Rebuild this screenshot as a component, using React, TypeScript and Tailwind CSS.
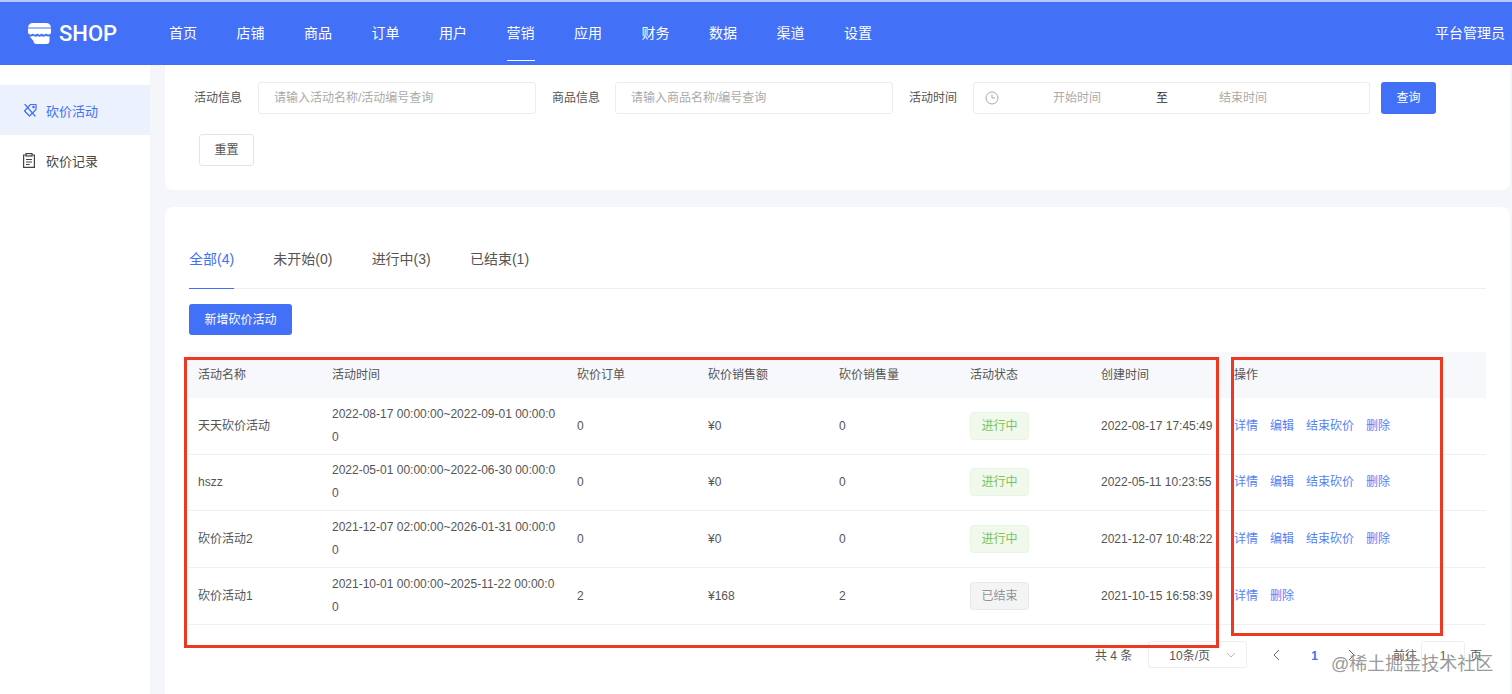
const navItems = ["首页", "店铺", "商品", "订单", "用户", "营销", "应用", "财务", "数据", "渠道", "设置"];

const tabs = ["全部(4)", "未开始(0)", "进行中(3)", "已结束(1)"];

const columns = ["活动名称", "活动时间", "砍价订单", "砍价销售额", "砍价销售量", "活动状态", "创建时间", "操作"];

const rows = [
  { name: "天天砍价活动", time: "2022-08-17 00:00:00~2022-09-01 00:00:00", orders: "0", amount: "¥0", qty: "0", active: true, created: "2022-08-17 17:45:49" },
  { name: "hszz", time: "2022-05-01 00:00:00~2022-06-30 00:00:00", orders: "0", amount: "¥0", qty: "0", active: true, created: "2022-05-11 10:23:55" },
  { name: "砍价活动2", time: "2021-12-07 02:00:00~2026-01-31 00:00:00", orders: "0", amount: "¥0", qty: "0", active: true, created: "2021-12-07 10:48:22" },
  { name: "砍价活动1", time: "2021-10-01 00:00:00~2025-11-22 00:00:00", orders: "2", amount: "¥168", qty: "2", active: false, created: "2021-10-15 16:58:39" },
];

const gridCols = "grid grid-cols-[134px_245px_131px_131px_131px_131px_133px_262px]";

function ShopLogo() {
  return (
    <svg width="23" height="21" viewBox="0 0 23 21" fill="none">
      {/* lid */}
      <path d="M5 0h13a5 5 0 0 1 5 4.500H0A5 5 0 0 1 5 0Z" fill="#fff" />
      {/* awning */}
      <path d="M0 5.500h23V10c-1.500 2-3.800 2-5 .4-1.300 1.600-3.300 1.600-4.400.1-1.200 1.500-3 1.500-4.200 0-1.200 1.500-3.200 1.500-4.400-.1C3.800 12 1.500 12 0 10Z" fill="#fff" />
      {/* body */}
      <path d="M1.500 13.200c1.500.6 2.900.3 3.900-.5 1.300 1.200 3 1.200 4.200.3 1.200.9 2.800.9 4 0 1.100.9 2.900.9 4.100-.3 1 .8 2.300 1.100 3.800.5V18a3 3 0 0 1-3 3h-10a3 3 0 0 1-3-3Z" fill="#fff" />
    </svg>
  );
}

function TagIcon() {
  return (
    <svg width="16" height="16" viewBox="0 0 16 16" fill="none" stroke="#4270f6" strokeWidth="1.200" strokeLinejoin="round">
      <path d="M8.500 2.500 14 2.500 14 7.500 7.500 14 2.500 9Z" />
      <path d="M3 2.500 13 14" strokeLinecap="round" />
      <circle cx="11.500" cy="5" r="0.700" />
    </svg>
  );
}

function ClipboardIcon() {
  return (
    <svg width="12" height="15" viewBox="0 0 12 15" fill="none" stroke="#444" strokeWidth="1.200">
      <path d="M3 2H.6v12.400h10.800V2H9" />
      <rect x="3" y="0.600" width="6" height="2.400" />
      <path d="M3 6.500h6M3 9h6M3 11.500h3.500" />
    </svg>
  );
}

function ClockIcon() {
  return (
    <svg width="14" height="14" viewBox="0 0 14 14" fill="none" stroke="#aaa" strokeWidth="1">
      <circle cx="7" cy="7" r="6" />
      <path d="M7 3.500V7h3" />
    </svg>
  );
}

function Action({ children }: { children: string }) {
  return <span className="mr-[12px] text-[#5a80f5]">{children}</span>;
}

export default function App() {
  return (
    <div className="relative h-[694px] w-[1512px] overflow-hidden bg-[#f5f6fa] text-[12px] text-[#555] [font-family:'Liberation_Sans','Noto_Sans_CJK_SC',sans-serif]">
      {/* Header */}
      <header className="flex h-[65px] items-center border-t-2 border-[#b4c8fb] bg-[#4270f6] text-white">
        <div className="ml-[28px] flex w-[141px] items-center gap-[8px]">
          <ShopLogo />
          <span className="pt-[1px] text-[22px] font-medium leading-none [font-family:Roboto,sans-serif]">SHOP</span>
        </div>
        <nav className="flex h-full gap-[39.500px]">
          {navItems.map((item) => (
            <div key={item} className="relative flex h-full items-center text-[14px]">
              {item}
              {item === "营销" && <div className="absolute bottom-[4px] left-0 h-[1px] w-full bg-white" />}
            </div>
          ))}
        </nav>
        <span className="ml-auto mr-[7px] text-[14px]">平台管理员</span>
      </header>

      <div className="flex h-[629px]">
        {/* Sidebar */}
        <aside className="w-[150px] shrink-0 bg-white pt-[20px] text-[13px]">
          <div className="flex h-[50px] items-center gap-[8px] bg-[#ecf1fe] pl-[22px] text-[#4270f6]">
            <TagIcon />
            <span className="pt-[3px]">砍价活动</span>
          </div>
          <div className="flex h-[50px] items-center gap-[11px] pl-[23px] text-[#444]">
            <ClipboardIcon />
            <span className="pt-[3px]">砍价记录</span>
          </div>
        </aside>

        <main className="ml-[15px] flex min-w-0 flex-1 flex-col gap-[17px] pr-[2px]">
          {/* Search */}
          <section className="h-[125px] rounded-b-[8px] bg-white pl-[29px] pt-[17px]">
            <div className="flex items-center">
              <span className="w-[64px]">活动信息</span>
              <div className="flex h-[32px] w-[278px] items-center rounded-[3px] border border-[#ececec] pl-[15px] text-[#aaa]">请输入活动名称/活动编号查询</div>
              <span className="ml-[16px] w-[63px]">商品信息</span>
              <div className="flex h-[32px] w-[278px] items-center rounded-[3px] border border-[#ececec] pl-[15px] text-[#aaa]">请输入商品名称/编号查询</div>
              <span className="ml-[16px] w-[64px]">活动时间</span>
              <div className="flex h-[32px] w-[397px] items-center rounded-[3px] border border-[#ececec] pl-[11px] text-[#aaa]">
                <ClockIcon />
                <span className="ml-[54px]">开始时间</span>
                <span className="ml-[55px] text-[#333]">至</span>
                <span className="ml-[51px]">结束时间</span>
              </div>
              <button className="ml-[11px] h-[32px] w-[55px] rounded-[3px] bg-[#4270f6] text-white">查询</button>
            </div>
            <button className="ml-[5px] mt-[20px] h-[32px] w-[55px] rounded-[3px] border border-[#e4e4e4] bg-white">重置</button>
          </section>

          {/* List */}
          <section className="flex-1 rounded-t-[8px] bg-white pl-[24px] pt-[34px]">
            <div className="mr-[24px] flex h-[48px] gap-[39.200px] border-b border-[#efefef] text-[14px]">
              {tabs.map((tab, i) => (
                <div key={tab} className={i === 0 ? "-mb-px h-[48px] border-b border-[#4270f6] pt-[8px] text-[#4270f6]" : "pt-[8px]"}>
                  {tab}
                </div>
              ))}
            </div>
            <button className="mt-[15px] h-[31px] w-[103px] rounded-[3px] bg-[#4270f6] text-white">新增砍价活动</button>

            <div className="mt-[17px] w-[1298px] -translate-x-px">
              <div className={`${gridCols} h-[46px] items-center bg-[#f6f8fc]`}>
                {columns.map((col) => (
                  <div key={col} className="px-[10px]">{col}</div>
                ))}
              </div>
              {rows.map((row) => (
                <div key={row.name} className={`${gridCols} h-[56.650px] items-center border-b border-[#f0f0f0]`}>
                  <div className="px-[10px]">{row.name}</div>
                  <div className="break-all px-[10px] leading-[23px]">{row.time}</div>
                  <div className="px-[10px]">{row.orders}</div>
                  <div className="px-[10px]">{row.amount}</div>
                  <div className="px-[10px]">{row.qty}</div>
                  <div className="px-[10px]">
                    {row.active ? (
                      <span className="inline-flex h-[28px] w-[59px] items-center justify-center rounded-[4px] border border-[#e8f5e0] bg-[#f0f9eb] text-[#78c35a]">进行中</span>
                    ) : (
                      <span className="inline-flex h-[28px] w-[59px] items-center justify-center rounded-[4px] border border-[#e9e9eb] bg-[#f4f4f5] text-[#909399]">已结束</span>
                    )}
                  </div>
                  <div className="whitespace-nowrap px-[10px]">{row.created}</div>
                  <div className="whitespace-nowrap px-[10px]">
                    <Action>详情</Action>
                    {row.active && <Action>编辑</Action>}
                    {row.active && <Action>结束砍价</Action>}
                    <Action>删除</Action>
                  </div>
                </div>
              ))}
            </div>

            {/* Pagination */}
            <div className="mt-[16.400px] flex h-[28px] items-center pl-[906px]">
              <span className="pt-[3px]">共 4 条</span>
              <div className="ml-[16px] flex h-[27px] w-[99px] items-center justify-between rounded-[3px] border border-[#eee] pl-[20px] pr-[10px]">
                <span className="pt-[2px]">10条/页</span>
                <svg width="10" height="6" viewBox="0 0 10 6" fill="none" stroke="#bbb"><path d="M1 1l4 4 4-4" /></svg>
              </div>
              <svg className="ml-[25px]" width="8" height="12" viewBox="0 0 8 12" fill="none" stroke="#666"><path d="M7 1 2 6l5 5" /></svg>
              <span className="ml-[31px] pt-[3px] font-bold text-[#4270f6]">1</span>
              <svg className="ml-[30px]" width="8" height="12" viewBox="0 0 8 12" fill="none" stroke="#666"><path d="M1 1l5 5-5 5" /></svg>
              <span className="ml-[37px] pt-[3px]">前往</span>
              <div className="ml-[4px] flex h-[27px] w-[44px] items-center justify-center rounded-[3px] border border-[#eee] pt-[2px]">1</div>
              <span className="ml-[5px] pt-[3px]">页</span>
            </div>
          </section>
        </main>
      </div>

      {/* Annotation boxes drawn over the screenshot */}
      <div className="absolute left-[184px] top-[357px] h-[291px] w-[1035px] border-[3px] border-[#ec3a22]" />
      <div className="absolute left-[1231px] top-[357px] h-[279px] w-[212px] border-[3px] border-[#ec3a22]" />

      {/* Watermark */}
      <div className="absolute left-[1331px] top-[652px] text-[18px] leading-[24px] text-[#8d8d8d]/90">@稀土掘金技术社区</div>
    </div>
  );
}
